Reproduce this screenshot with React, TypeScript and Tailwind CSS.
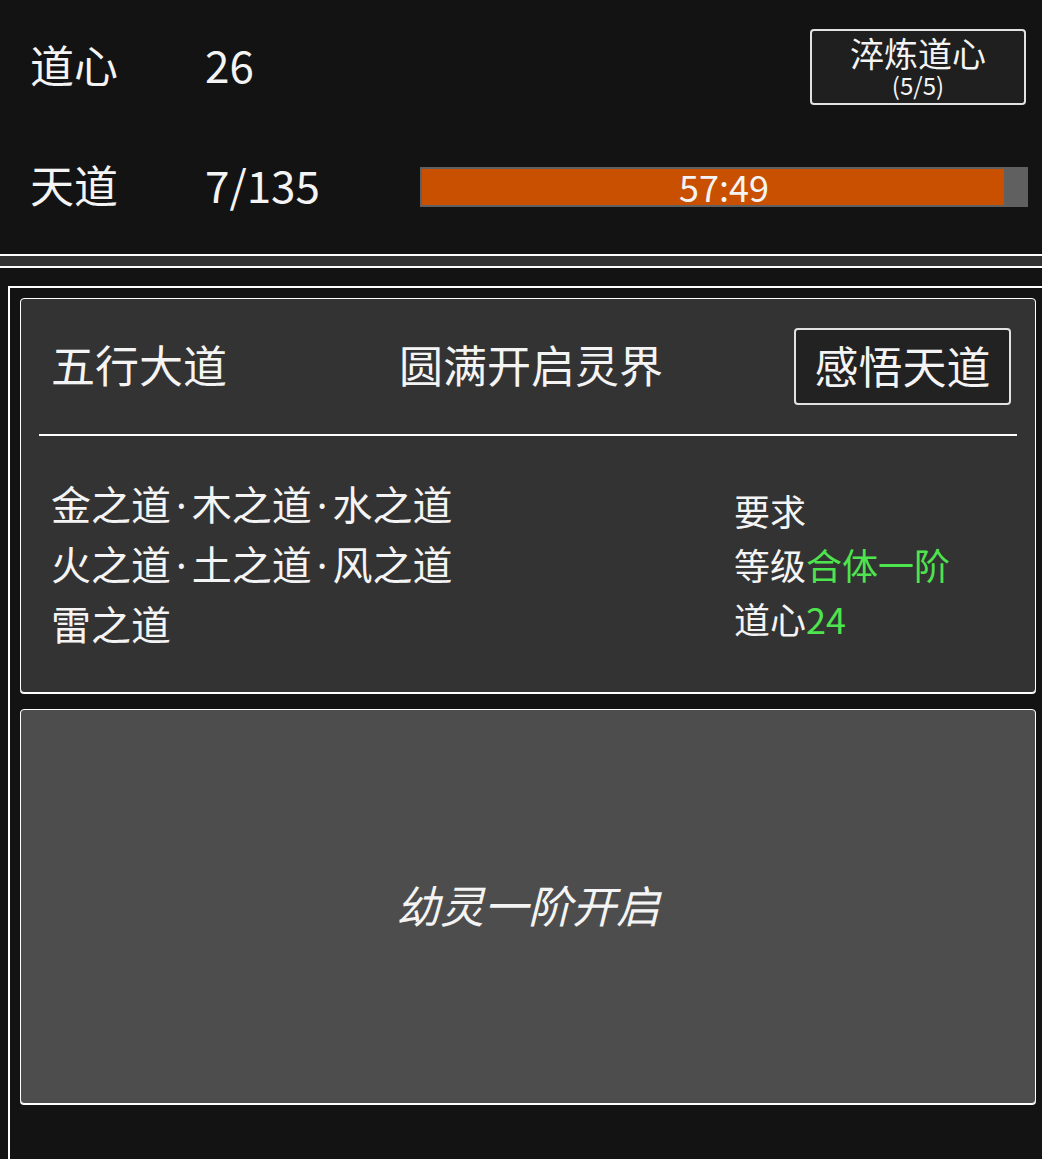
import React from "react";

const font = { fontFamily: '"Noto Sans CJK SC", "Noto Sans", sans-serif' };

const elements = [
  ["金之道", "木之道", "水之道"],
  ["火之道", "土之道", "风之道"],
  ["雷之道"],
];

// remaining time fraction for the 天道 bar
const progress = 0.964;

function StatRow({ label, value, children }: { label: string; value: string; children?: React.ReactNode }) {
  return (
    <div className="flex h-[120px] items-center">
      <div className="mb-[6px] w-[175px] text-[44px] leading-none text-[#f4f4f4]">{label}</div>
      <div className="mb-[6px] w-[215px] text-[44px] leading-none text-[#f4f4f4]">{value}</div>
      <div className="flex flex-1 items-center justify-end">{children}</div>
    </div>
  );
}

export default function App() {
  return (
    <div className="min-h-[1159px] w-[1042px] overflow-hidden bg-[#131313] text-white" style={font}>
      <div className="pl-[30px] pr-[14px] pt-[7px] pb-[7px]">
        <StatRow label="道心" value="26">
          <button className="mr-[2px] flex h-[76px] w-[216px] flex-col items-center justify-center rounded-[4px] border-2 border-[#e2e2e2] bg-[#1f1f1f] text-[#f4f4f4]">
            <div className="h-[36px] text-[34px] leading-[36px]">淬炼道心</div>
            <div className="h-[28px] text-[24px] leading-[28px]">(5/5)</div>
          </button>
        </StatRow>
        <StatRow label="天道" value="7/135">
          <div className="relative h-[40px] w-full border-2 border-[#606060] bg-[#606060]">
            <div className="h-full bg-[#c85000]" style={{ width: `${progress * 100}%` }} />
            <div className="absolute inset-0 flex items-center justify-center pb-[2px] text-[36px] leading-none text-[#f4f4f4]">
              57:49
            </div>
          </div>
        </StatRow>
      </div>

      <div className="h-[14px] border-y-2 border-white bg-[#333333]" />

      <div className="mt-[18px] ml-[8px] w-[1040px] border-2 border-white px-[10px] pt-[10px] pb-[60px]">
        <div className="h-[395px] rounded-[4px] border border-white bg-[#333333] px-[18px] shadow-[0_1px_0_#ffffff]">
          <div className="flex h-[137px] items-center border-b-2 border-white pl-[12px] pr-[6px]">
            <div className="mb-[6px] w-[348px] text-[44px] leading-none text-[#f4f4f4]">五行大道</div>
            <div className="mb-[6px] flex-1 text-[44px] leading-none text-[#f4f4f4]">圆满开启灵界</div>
            <button className="flex h-[77px] w-[217px] items-center justify-center rounded-[4px] border-2 border-[#e2e2e2] bg-[#222222] pb-[4px] text-[44px] leading-none text-[#f4f4f4]">
              感悟天道
            </button>
          </div>
          <div className="flex h-[255px] items-center pl-[12px]">
            <div className="w-[683px] text-[40px] leading-[59px] text-[#f4f4f4]">
              {elements.map((line) => (
                <div key={line.join()}>
                  {line.map((item, i) => (
                    <React.Fragment key={item}>
                      {i > 0 && (
                        <span className="px-[5px]" style={{ fontFamily: '"Noto Sans", sans-serif' }}>
                          ·
                        </span>
                      )}
                      {item}
                    </React.Fragment>
                  ))}
                </div>
              ))}
            </div>
            <div className="text-[36px] leading-[54px] text-[#f4f4f4]">
              <div>要求</div>
              <div>
                等级<span className="text-[#4ee44e]">合体一阶</span>
              </div>
              <div>
                道心<span className="text-[#4ee44e]">24</span>
              </div>
            </div>
          </div>
        </div>

        <div className="mt-[16px] flex h-[395px] items-center justify-center rounded-[4px] border border-white bg-[#4d4d4d] pb-[6px] shadow-[0_1px_0_#ffffff]">
          <span className="text-[44px] italic leading-none text-[#f4f4f4]">幼灵一阶开启</span>
        </div>
      </div>
    </div>
  );
}
